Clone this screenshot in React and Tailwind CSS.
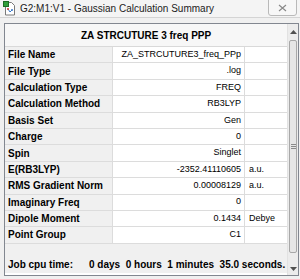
import React from "react";

const rows = [
  ["File Name", "ZA_STRCUTURE3_freq_PPp", ""],
  ["File Type", ".log", ""],
  ["Calculation Type", "FREQ", ""],
  ["Calculation Method", "RB3LYP", ""],
  ["Basis Set", "Gen", ""],
  ["Charge", "0", ""],
  ["Spin", "Singlet", ""],
  ["E(RB3LYP)", "-2352.41110605", "a.u."],
  ["RMS Gradient Norm", "0.00008129", "a.u."],
  ["Imaginary Freq", "0", ""],
  ["Dipole Moment", "0.1434", "Debye"],
  ["Point Group", "C1", ""],
];

function AppIcon() {
  return (
    <svg width="13" height="15" viewBox="0 0 13 15">
      <path d="M2.5 1.5h6l3 3v9.5h-9z" fill="#fff" stroke="#7a7a7a" />
      <rect x="0.5" y="0.5" width="5" height="5" fill="#2f9e3a" stroke="#1d6b25" />
      <path d="M5 8l2 3l2-2" fill="none" stroke="#3a78c8" strokeWidth="1" />
      <circle cx="5" cy="8" r="1" fill="#c33" />
      <circle cx="9" cy="9" r="1" fill="#3a78c8" />
    </svg>
  );
}

export default function App() {
  return (
    <div
      className="w-[300px] h-[279px] bg-[#f0f0f0] flex flex-col overflow-hidden text-black"
      style={{ fontFamily: '"Liberation Sans", Arial, sans-serif' }}
    >
      {/* title bar */}
      <div className="h-[18px] flex items-center bg-[#f4f4f4] border-b border-[#d4d4d4] relative">
        <div className="pl-[3px] pr-[4px] flex items-center">
          <AppIcon />
        </div>
        <span className="text-[10px] text-[#222]">G2:M1:V1 - Gaussian Calculation Summary</span>
        <div className="absolute right-[3px] top-[-1px] w-[29px] h-[17px] border border-[#b9b9b9] rounded-b-[3px] bg-[#f7f7f7] flex items-center justify-center">
          <svg width="9" height="8" viewBox="0 0 9 8">
            <path d="M1 1l7 6M8 1l-7 6" stroke="#8a8a8a" strokeWidth="1.2" />
          </svg>
        </div>
      </div>

      <div className="flex-1 pt-[5px] pl-[4px] pr-[2px] pb-[3px] flex">
        <div className="flex-1 flex border border-[#828790] bg-white">
          <div className="flex-1 flex flex-col">
            <div className="h-[23px] flex items-center justify-center border-b border-[#d9d9d9] bg-[#f7f7f7] text-[10px] font-bold">
              ZA STRCUTURE 3 freq PPP
            </div>
            {rows.map(([label, value, unit]) => (
              <div key={label} className="h-[16.4px] flex border-b border-[#dcdcdc] text-[9px]">
                <div className="w-[108px] bg-[#f0f0f0] border-r border-[#dcdcdc] pl-[3px] flex items-center font-bold text-[10px]">
                  {label}
                </div>
                <div className="w-[132px] border-r border-[#dcdcdc] flex items-center justify-end pr-[3px] text-[9px]">
                  {value}
                </div>
                <div className="flex-1 flex items-center pl-[4px] text-[9px]">{unit}</div>
              </div>
            ))}
            <div className="flex-1 bg-[#f0f0f0]" />
            <div className="h-[17px] mb-[2px] bg-[#f0f0f0] flex items-center pl-[3px] pr-[2px] font-bold text-[10px] whitespace-pre">
              <span className="w-[81px]">Job cpu time:</span>
              <span>0 days  0 hours  1 minutes  35.0 seconds.</span>
            </div>
          </div>
          {/* scrollbar */}
          <div className="w-[11px] bg-[#ececec] border-l border-[#e2e2e2] flex flex-col">
            <div className="h-[16px] flex items-center justify-center">
              <svg width="7" height="4" viewBox="0 0 7 4">
                <path d="M0 4L3.5 0L7 4z" fill="#505050" />
              </svg>
            </div>
            <div className="flex-1 mx-[1px] border border-[#a8a8a8] rounded-[2px] bg-[#e6e6e6] flex flex-col items-center justify-center gap-[1px]">
              <div className="w-[5px] h-[1px] bg-[#8a8a8a]" />
              <div className="w-[5px] h-[1px] bg-[#8a8a8a]" />
              <div className="w-[5px] h-[1px] bg-[#8a8a8a]" />
            </div>
            <div className="h-[22px] flex items-end justify-center pb-[4px]">
              <svg width="7" height="4" viewBox="0 0 7 4">
                <path d="M0 0L3.5 4L7 0z" fill="#505050" />
              </svg>
            </div>
          </div>
        </div>
      </div>
    </div>
  );
}
